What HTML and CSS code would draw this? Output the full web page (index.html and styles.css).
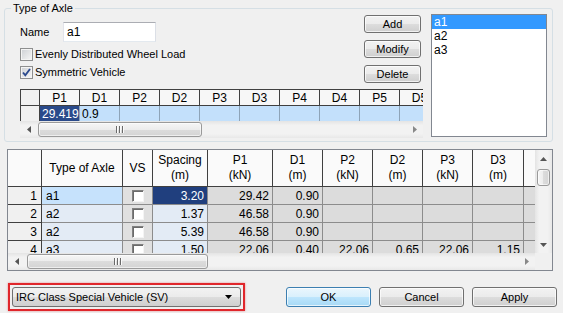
FILE: index.html
```html
<!DOCTYPE html>
<html>
<head>
<meta charset="utf-8">
<link rel="stylesheet" href="styles.css">
</head>
<body>
<div class="dlg">

<fieldset class="axle">
  <legend>Type of Axle</legend>
  <div class="axle-body">
    <div class="axle-left">
      <div class="axle-top">
        <div class="fields">
          <div class="name-row"><span class="lbl">Name</span><input class="txt" value="a1"></div>
          <div class="chk"><span class="box"></span>Evenly Distributed Wheel Load</div>
          <div class="chk"><span class="box"><svg width="9" height="9" viewBox="0 0 9 9"><polyline points="1,4.5 3.3,7.3 8,1" fill="none" stroke="#2b4a8e" stroke-width="1.9"/></svg></span>Symmetric Vehicle</div>
        </div>
        <div class="btns">
          <button class="btn">Add</button>
          <button class="btn">Modify</button>
          <button class="btn">Delete</button>
        </div>
      </div>

      <div class="mini">
        <div class="view">
          <table>
            <tr>
              <th class="c0"></th><th>P1</th><th>D1</th><th>P2</th><th>D2</th><th>P3</th><th>D3</th><th>P4</th><th>D4</th><th>P5</th><th>D5</th>
            </tr>
            <tr>
              <td class="c0"></td><td class="sel">29.419</td><td>0.9</td><td></td><td></td><td></td><td></td><td></td><td></td><td></td><td></td>
            </tr>
          </table>
        </div>
        <div class="hscroll">
          <span class="arr"><svg width="4" height="7"><polygon points="4,0 4,7 0,3.5" fill="#555"/></svg></span>
          <div class="track"><span class="thumb mini-thumb"><i class="grip"></i></span></div>
          <span class="arr"><svg width="4" height="7"><polygon points="0,0 0,7 4,3.5" fill="#888"/></svg></span>
        </div>
      </div>
    </div>

    <div class="list">
      <div class="item sel">a1</div>
      <div class="item">a2</div>
      <div class="item">a3</div>
    </div>
  </div>
</fieldset>

<div class="grid">
  <div class="view">
    <table>
      <tr>
        <th class="w-rh"></th>
        <th class="w-nm">Type of Axle</th>
        <th class="w-vs">VS</th>
        <th class="w-sp">Spacing<br>(m)</th>
        <th class="w-p1">P1<br>(kN)</th>
        <th class="w-50">D1<br>(m)</th>
        <th class="w-50">P2<br>(kN)</th>
        <th class="w-50">D2<br>(m)</th>
        <th class="w-50">P3<br>(kN)</th>
        <th class="w-51">D3<br>(m)</th>
        <th class="w-50"></th>
      </tr>
      <tr>
        <td class="rh">1</td><td class="nm sel">a1</td><td class="vs"><span class="cb"></span></td><td class="sp sel">3.20</td>
        <td>29.42</td><td>0.90</td><td></td><td></td><td></td><td></td><td></td>
      </tr>
      <tr>
        <td class="rh">2</td><td class="nm">a2</td><td class="vs"><span class="cb"></span></td><td class="sp">1.37</td>
        <td>46.58</td><td>0.90</td><td></td><td></td><td></td><td></td><td></td>
      </tr>
      <tr>
        <td class="rh">3</td><td class="nm">a2</td><td class="vs"><span class="cb"></span></td><td class="sp">5.39</td>
        <td>46.58</td><td>0.90</td><td></td><td></td><td></td><td></td><td></td>
      </tr>
      <tr>
        <td class="rh">4</td><td class="nm">a3</td><td class="vs"><span class="cb"></span></td><td class="sp">1.50</td>
        <td>22.06</td><td>0.40</td><td>22.06</td><td>0.65</td><td>22.06</td><td>1.15</td><td></td>
      </tr>
    </table>
  </div>
  <div class="vscroll">
    <span class="arr"><svg width="7" height="4"><polygon points="0,4 7,4 3.5,0" fill="#555"/></svg></span>
    <div class="track"><span class="thumb v-thumb"></span></div>
    <span class="arr"><svg width="7" height="4"><polygon points="0,0 7,0 3.5,4" fill="#555"/></svg></span>
  </div>
  <div class="hscroll">
    <span class="arr"><svg width="4" height="7"><polygon points="4,0 4,7 0,3.5" fill="#555"/></svg></span>
    <div class="track"><span class="thumb big-thumb"><i class="grip"></i></span></div>
    <span class="arr"><svg width="4" height="7"><polygon points="0,0 0,7 4,3.5" fill="#888"/></svg></span>
  </div>
  <div class="corner"></div>
</div>

<div class="foot">
  <div class="mark">
    <div class="combo">
      <span>IRC Class Special Vehicle (SV)</span>
      <svg width="7" height="4"><polygon points="0,0 7,0 3.5,4" fill="#000"/></svg>
    </div>
  </div>
  <div class="actions">
    <button class="btn def">OK</button>
    <button class="btn">Cancel</button>
    <button class="btn">Apply</button>
  </div>
</div>

</div>
</body>
</html>
```

FILE: styles.css
```css
* {
  box-sizing: border-box;
}

body {
  margin: 0;
  background: #f0f0f0;
  font-family: "Liberation Sans", Arial, sans-serif;
  font-size: 11px;
  color: #000;
}

.dlg {
  width: 563px;
  height: 313px;
  overflow: hidden;
}

/* group box */
.axle {
  margin: 2px 10px 0 4px;
  padding: 0;
  min-width: 0;
  border: 1px solid #d5dfe5;
  border-radius: 3px;
}
.axle legend {
  margin-left: 6px;
  padding: 0 2px;
  line-height: 12px;
}
.axle-body {
  display: flex;
  align-items: flex-start;
  padding: 0 5px 3px 15px;
}
.axle-left {
  width: 403px;
}
.axle-top {
  height: 75px;
  display: flex;
  justify-content: space-between;
}

.name-row {
  display: flex;
  align-items: center;
  height: 20px;
  margin-top: 8px;
}
.name-row .lbl {
  width: 43px;
}
.txt {
  width: 93px;
  height: 20px;
  padding: 0 3px;
  border: 1px solid;
  border-color: #abadb3 #dbdfe6 #e3e9ef #e2e3ea;
  background: #fff;
  font: 12px "Liberation Sans", Arial, sans-serif;
  color: #000;
  outline: none;
}

.chk {
  display: flex;
  align-items: center;
  height: 18px;
}
.name-row + .chk {
  margin-top: 3px;
}
.box {
  width: 13px;
  height: 13px;
  margin-right: 2px;
  display: flex;
  align-items: center;
  justify-content: center;
  border: 1px solid #8e8f8f;
  background: linear-gradient(135deg, #cdd0d4, #f7f7f7);
  box-shadow: inset 0 0 0 1px #f4f4f4;
}

/* buttons */
.btn {
  width: 57px;
  height: 18px;
  padding: 0;
  font: 11px "Liberation Sans", Arial, sans-serif;
  color: #000;
  border: 1px solid #707070;
  border-radius: 3px;
  background: linear-gradient(#f2f2f2, #ebebeb 50%, #dddddd 50%, #cfcfcf);
  box-shadow: inset 0 0 0 1px rgba(255, 255, 255, 0.7);
}
.btn.def {
  border-color: #3c7fb1;
  background: linear-gradient(#eaf6fd, #d9f0fc 50%, #bee6fd 50%, #a7d9f5);
}
.btns {
  display: flex;
  flex-direction: column;
  gap: 7px;
  margin: 1px 2px 0 0;
}

/* small P/D grid */
.mini .view {
  width: 403px;
  overflow: hidden;
}
.mini table {
  width: 420px;
  table-layout: fixed;
  border-collapse: separate;
  border-spacing: 0;
  font-size: 12px;
}
.mini th {
  width: 40px;
  height: 17px;
  padding: 0;
  font-weight: normal;
  line-height: 14px;
  background: #f7f7f7;
  border-top: 1px solid #404040;
  border-right: 1px solid #404040;
  border-bottom: 1px solid #404040;
}
.mini td {
  height: 15px;
  padding: 0 2px;
  line-height: 14px;
  background: #c3e0fb;
  border-right: 1px solid #8ea4b8;
}
.mini .c0 {
  width: 20px;
  background: #f0f0f0;
  border-left: 1px solid #404040;
  border-right-color: #404040;
}
.mini td.sel {
  background: #2a4a8a;
  color: #fff;
}

/* list box */
.list {
  width: 116px;
  height: 123px;
  margin-left: 8px;
  border: 1px solid #828790;
  background: #fff;
}
.item {
  height: 14px;
  line-height: 14px;
  padding-left: 2px;
  font-size: 12px;
}
.item.sel {
  background: #3399ff;
  color: #fff;
}

/* scroll bars */
.hscroll {
  display: flex;
  height: 17px;
  background: linear-gradient(#e4e4e4, #f2f2f2 25%, #f2f2f2 75%, #e8e8e8);
}
.vscroll {
  display: flex;
  flex-direction: column;
  background: linear-gradient(90deg, #e4e4e4, #f2f2f2 25%, #f2f2f2 75%, #e8e8e8);
}
.arr {
  flex: none;
  width: 17px;
  height: 17px;
  display: flex;
  align-items: center;
  justify-content: center;
}
.arr svg {
  display: block;
}
.track {
  flex: 1;
  display: flex;
}
.thumb {
  display: flex;
  align-items: center;
  justify-content: center;
  border: 1px solid #9a9a9a;
  border-radius: 3px;
  background: linear-gradient(#f6f6f6, #ececec 50%, #dcdcdc 50%, #d4d4d4);
  box-shadow: inset 0 0 0 1px rgba(255, 255, 255, 0.6);
}
.hscroll .thumb {
  margin: 1px 0;
}
.mini-thumb {
  width: 164px;
  margin-left: 1px !important;
}
.big-thumb {
  width: 181px;
  margin-left: 2px !important;
}
.v-thumb {
  width: 13px;
  height: 17px;
  margin: 2px 0 0 2px;
  background: linear-gradient(90deg, #f6f6f6, #ececec 50%, #dcdcdc 50%, #d4d4d4);
}
.grip {
  width: 8px;
  height: 7px;
  background: repeating-linear-gradient(90deg, #6a6a6a 0 1px, #fbfbfb 1px 2px, transparent 2px 3px);
}

/* main axle grid */
.grid {
  display: grid;
  grid-template-columns: 527px 17px;
  grid-template-rows: 103px 17px;
  width: 546px;
  height: 122px;
  margin: 7px 0 0 7px;
  border: 1px solid #828790;
  background: #fff;
}
.grid .view {
  overflow: hidden;
}
.grid table {
  width: 566px;
  table-layout: fixed;
  border-collapse: separate;
  border-spacing: 0;
  font-size: 12px;
}
.grid th {
  height: 37px;
  padding: 0;
  font-weight: normal;
  line-height: 15px;
  background: #fafafa;
  border-right: 1px solid #404040;
  border-bottom: 1px solid #404040;
}
.w-rh { width: 34px; }
.w-nm { width: 81px; }
.w-vs { width: 30px; }
.w-sp { width: 55px; }
.w-p1 { width: 65px; }
.w-50 { width: 50px; }
.w-51 { width: 51px; }

.grid td {
  height: 18px;
  padding: 0 3px;
  line-height: 16px;
  text-align: right;
  background: #dcdcdc;
  border-right: 1px solid #8c8c8c;
  border-bottom: 1px solid #8c8c8c;
}
.grid td.rh {
  padding-right: 4px;
  background: #f0f0f0;
  border-right-color: #404040;
  border-bottom-color: #404040;
}
.grid td.nm {
  text-align: left;
  padding-left: 4px;
  background: #e3ebf5;
}
.grid td.nm.sel {
  background: #c6e2fc;
}
.grid td.vs {
  text-align: center;
  background: #e0e0e0;
}
.grid td.sp {
  background: #e3ebf5;
}
.grid td.sp.sel {
  background: #203f7e;
  color: #fff;
}
.cb {
  display: inline-block;
  width: 12px;
  height: 12px;
  vertical-align: middle;
  background: #fff;
  border: 1px solid;
  border-color: #808080 #f4f4f4 #f4f4f4 #808080;
  box-shadow: inset 1px 1px #6a6a6a;
}
.corner {
  background: #f0f0f0;
}

/* bottom row */
.foot {
  display: flex;
  align-items: center;
  margin-top: 12px;
  padding: 0 6px 0 8px;
}
.mark {
  padding: 2px;
  border: 2px solid #e0262b;
  box-shadow: 0 0 2px rgba(224, 38, 43, 0.5);
}
.combo {
  width: 229px;
  height: 20px;
  display: flex;
  align-items: center;
  justify-content: space-between;
  padding: 0 8px 0 3px;
  border: 1px solid #707070;
  border-radius: 3px;
  background: linear-gradient(#f2f2f2, #ebebeb 50%, #dddddd 50%, #cfcfcf);
}
.actions {
  display: flex;
  gap: 8px;
  margin-left: auto;
}
.actions .btn {
  width: 85px;
  height: 20px;
}
```
